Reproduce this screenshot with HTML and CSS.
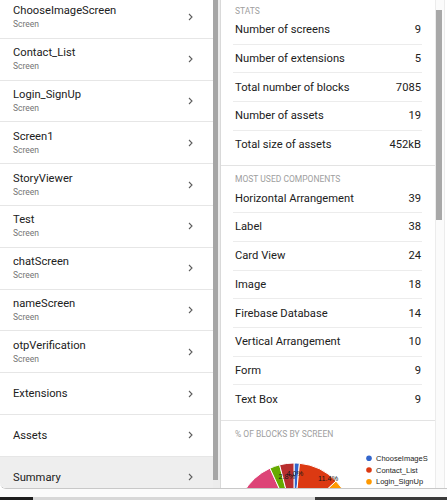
FILE: index.html
```html
<!DOCTYPE html>
<html>
<head>
<meta charset="utf-8">
<link rel="stylesheet" href="styles.css">
</head>
<body>
<div class="dialog">
  <div class="left">
    <div class="list">
      <div class="item"><div class="item-text"><span class="title">ChooseImageScreen</span><span class="sub">Screen</span></div><svg class="chev" viewBox="0 0 5 8"><path d="M1 1l3 3-3 3"/></svg></div>
      <div class="item"><div class="item-text"><span class="title">Contact_List</span><span class="sub">Screen</span></div><svg class="chev" viewBox="0 0 5 8"><path d="M1 1l3 3-3 3"/></svg></div>
      <div class="item"><div class="item-text"><span class="title">Login_SignUp</span><span class="sub">Screen</span></div><svg class="chev" viewBox="0 0 5 8"><path d="M1 1l3 3-3 3"/></svg></div>
      <div class="item"><div class="item-text"><span class="title">Screen1</span><span class="sub">Screen</span></div><svg class="chev" viewBox="0 0 5 8"><path d="M1 1l3 3-3 3"/></svg></div>
      <div class="item"><div class="item-text"><span class="title">StoryViewer</span><span class="sub">Screen</span></div><svg class="chev" viewBox="0 0 5 8"><path d="M1 1l3 3-3 3"/></svg></div>
      <div class="item"><div class="item-text"><span class="title">Test</span><span class="sub">Screen</span></div><svg class="chev" viewBox="0 0 5 8"><path d="M1 1l3 3-3 3"/></svg></div>
      <div class="item"><div class="item-text"><span class="title">chatScreen</span><span class="sub">Screen</span></div><svg class="chev" viewBox="0 0 5 8"><path d="M1 1l3 3-3 3"/></svg></div>
      <div class="item"><div class="item-text"><span class="title">nameScreen</span><span class="sub">Screen</span></div><svg class="chev" viewBox="0 0 5 8"><path d="M1 1l3 3-3 3"/></svg></div>
      <div class="item"><div class="item-text"><span class="title">otpVerification</span><span class="sub">Screen</span></div><svg class="chev" viewBox="0 0 5 8"><path d="M1 1l3 3-3 3"/></svg></div>
      <div class="item"><div class="item-text"><span class="title">Extensions</span></div><svg class="chev" viewBox="0 0 5 8"><path d="M1 1l3 3-3 3"/></svg></div>
      <div class="item"><div class="item-text"><span class="title">Assets</span></div><svg class="chev" viewBox="0 0 5 8"><path d="M1 1l3 3-3 3"/></svg></div>
      <div class="item active"><div class="item-text"><span class="title">Summary</span></div><svg class="chev" viewBox="0 0 5 8"><path d="M1 1l3 3-3 3"/></svg></div>
    </div>
  </div>
  <div class="lscroll"><div class="lthumb"></div></div>
  <div class="right">
    <div class="card">
      <section class="sec">
        <div class="sec-label">Stats</div>
        <div class="rows">
          <div class="row"><span>Number of screens</span><span>9</span></div>
          <div class="row"><span>Number of extensions</span><span>5</span></div>
          <div class="row"><span>Total number of blocks</span><span>7085</span></div>
          <div class="row"><span>Number of assets</span><span>19</span></div>
          <div class="row"><span>Total size of assets</span><span>452kB</span></div>
        </div>
      </section>
      <section class="sec">
        <div class="sec-label">Most used components</div>
        <div class="rows">
          <div class="row"><span>Horizontal Arrangement</span><span>39</span></div>
          <div class="row"><span>Label</span><span>38</span></div>
          <div class="row"><span>Card View</span><span>24</span></div>
          <div class="row"><span>Image</span><span>18</span></div>
          <div class="row"><span>Firebase Database</span><span>14</span></div>
          <div class="row"><span>Vertical Arrangement</span><span>10</span></div>
          <div class="row"><span>Form</span><span>9</span></div>
          <div class="row"><span>Text Box</span><span>9</span></div>
        </div>
      </section>
      <section class="sec chart-sec">
        <div class="sec-label">% of blocks by screen</div>
        <svg class="chart" width="214" height="70" viewBox="0 0 214 70">
          <g stroke="#fff" stroke-width="1">
            <path fill="#3366cc" d="M73 82L73 24A58 58 0 0 1 78.46 24.26Z"/>
            <path fill="#dc3912" d="M73 82L78.46 24.26A58 58 0 0 1 115.02 42.02Z"/>
            <path fill="#ff9900" d="M73 82L115.02 42.02A58 58 0 0 1 124 109.6Z"/>
            <path fill="#109618" d="M73 82L124 109.6A58 58 0 0 1 80.63 139.5Z"/>
            <path fill="#990099" d="M73 82L80.63 139.5A58 58 0 0 1 45.38 133Z"/>
            <path fill="#0099c6" d="M73 82L45.38 133A58 58 0 0 1 15.5 89.6Z"/>
            <path fill="#dd4477" d="M73 82L15.5 89.6A58 58 0 0 1 48.97 29.21Z"/>
            <path fill="#66aa00" d="M73 82L48.97 29.21A58 58 0 0 1 58.58 25.82Z"/>
            <path fill="#b82e2e" d="M73 82L58.58 25.82A58 58 0 0 1 73 24Z"/>
          </g>
          <g class="pie-labels">
            <text x="97" y="41.5">11.4%</text>
            <text x="57.5" y="39.5">2.8%</text>
            <text x="65.5" y="37">4.0%</text>
          </g>
          <g class="legend">
            <circle cx="148" cy="19.3" r="2.8" fill="#3366cc"/>
            <text x="155" y="22">ChooseImageS</text>
            <circle cx="148" cy="31" r="2.8" fill="#dc3912"/>
            <text x="155" y="33.7">Contact_List</text>
            <circle cx="148" cy="42.7" r="2.8" fill="#ff9900"/>
            <text x="155" y="45.4">Login_SignUp</text>
          </g>
        </svg>
      </section>
    </div>
    <div class="rscroll"><div class="rthumb"></div></div>
  </div>
</div>
<div class="below"></div>
<div class="taskbar"><span class="tb-a"></span><span class="tb-b"></span><span class="tb-c"></span></div>
</body>
</html>
```
FILE: styles.css
```css
html, body {
  margin: 0;
  background: #fff;
}
body {
  width: 447px;
  height: 500px;
  overflow: hidden;
  font-family: Roboto, "Liberation Sans", sans-serif;
}
.dialog {
  display: flex;
  height: 488px;
  border-bottom: 1px solid #c8c8c8;
  border-bottom-left-radius: 6px;
  overflow: hidden;
}
.left {
  width: 213px;
  overflow: hidden;
  background: #fff;
}
.list {
  margin-top: -3px;
}
.item {
  display: flex;
  align-items: center;
  height: 40.8px;
  border-bottom: 1px solid #e6e6e6;
  padding: 0 20px 0 13px;
}
.item.active {
  background: #eeeeee;
}
.item-text {
  flex: 1;
  display: flex;
  flex-direction: column;
}
.title {
  font-size: 11.2px;
  line-height: 15px;
  color: #212121;
}
.sub {
  font-size: 8.5px;
  line-height: 13px;
  color: #757575;
}
.chev {
  width: 5px;
  height: 8px;
}
.chev path {
  fill: none;
  stroke: #5f5f5f;
  stroke-width: 1.1;
}
.lscroll {
  width: 7px;
  background: #ececec;
}
.lthumb {
  width: 5px;
  height: 480px;
  background: #a6a6a6;
}
.right {
  flex: 1;
  display: flex;
  border-left: 1px solid #d9d9d9;
}
.card {
  width: 214px;
  margin-top: -2px;
}
.sec {
  padding: 8px 0 7px;
  border-bottom: 1px solid #e3e3e3;
}
.sec-label {
  font-size: 8.5px;
  line-height: 10px;
  color: #9e9e9e;
  padding-left: 14px;
  text-transform: uppercase;
}
.rows {
  margin: 0 13px 0 12px;
}
.row {
  display: flex;
  justify-content: space-between;
  align-items: center;
  height: 27.7px;
  border-bottom: 1px solid #ececec;
  padding: 0 1px 0 2px;
  font-size: 11.2px;
  color: #212121;
}
.row:last-child {
  border-bottom: none;
}
.chart-sec {
  padding-bottom: 0;
  border-bottom: none;
}
.chart {
  display: block;
}
.pie-labels text {
  font-family: "Liberation Sans", Arial, sans-serif;
  font-size: 7.3px;
  fill: #1a1a1a;
}
.legend text {
  font-family: "Liberation Sans", Arial, sans-serif;
  font-size: 7.5px;
  fill: #222;
}
.rscroll {
  width: 8px;
  border-left: 1px solid #ececec;
  border-right: 1px solid #ececec;
  background: #fbfbfb;
}
.rthumb {
  width: 6px;
  height: 210px;
  margin-top: 10px;
  background: #a8a8a8;
}
.below {
  height: 8px;
  background: #fbfbfb;
}
.taskbar {
  display: flex;
  height: 3px;
}
.tb-a {
  width: 33px;
  background: #1e1e1e;
}
.tb-b {
  width: 282px;
  background: #d8d8d8;
}
.tb-c {
  flex: 1;
  background: #3a3a3a;
}
```
